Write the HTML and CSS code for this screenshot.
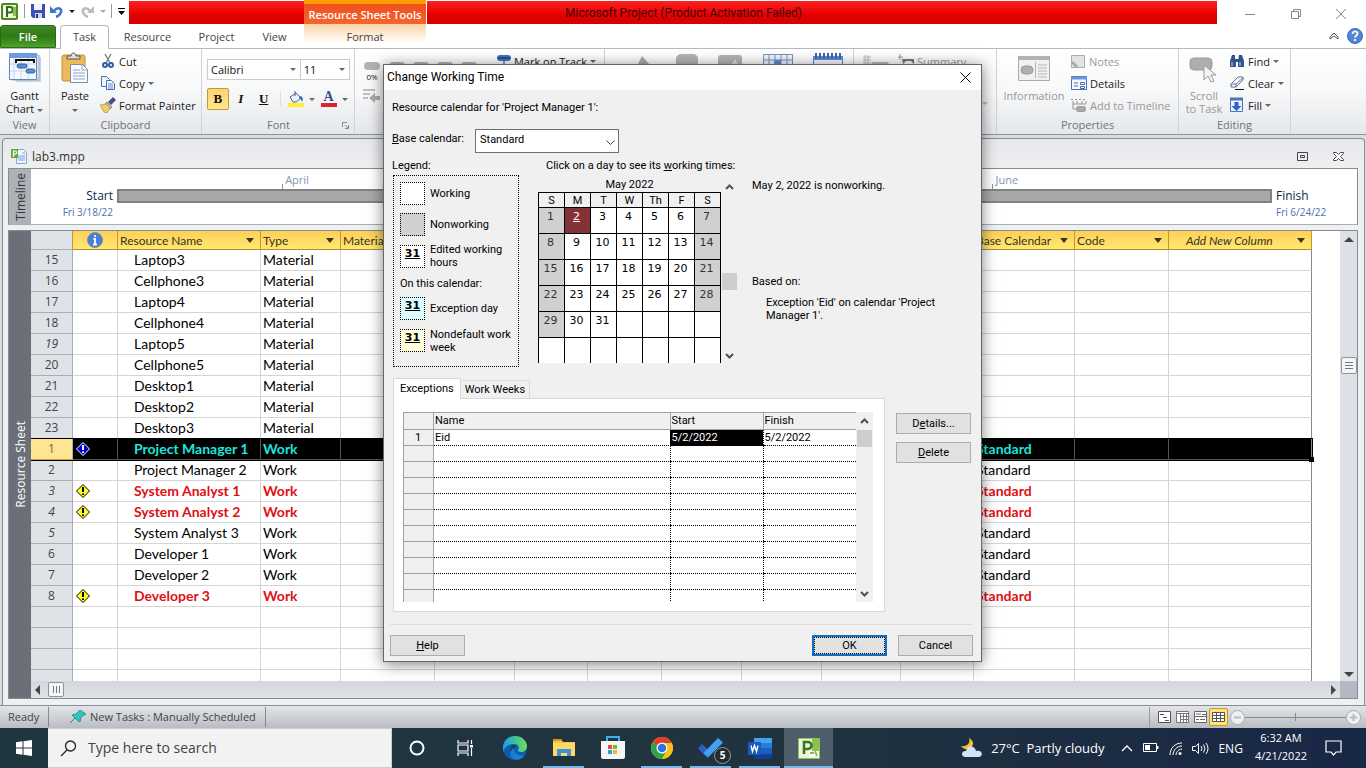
FILE: index.html
```html
<!DOCTYPE html>
<html lang="en">
<head>
<meta charset="utf-8">
<title>Microsoft Project</title>
<link rel="stylesheet" href="styles.css">
</head>
<body>
<svg class="defs" width="0" height="0" aria-hidden="true">
  <defs>
    <symbol id="warn" viewBox="0 0 14 14"><path d="M7 .5 13.5 7 7 13.5.5 7Z" stroke="#000" fill="#ffff1e"/><path d="M7 3v5M7 9.500v1.500" stroke="#000" stroke-width="2"/></symbol>
    <symbol id="warn-sel" viewBox="0 0 14 14"><path d="M7 .5 13.5 7 7 13.5.5 7Z" stroke="#fff" fill="#0000e0"/><path d="M7 3v5M7 9.500v1.500" stroke="#fff" stroke-width="2"/></symbol>
    <linearGradient id="edge" x1="0" x2="1"><stop offset="0" stop-color="#1b9de2"/><stop offset="1" stop-color="#6be05a"/></linearGradient>
  </defs>
</svg>

<header class="titlebar">
  <div class="quick">
    <svg width="17" height="17" viewBox="0 0 17 17"><rect x="1" y="1" width="15" height="15" rx="1" fill="#e8f3d6" stroke="#4d8a1c" stroke-width="2"/><path d="M3 3h8v11H3z" fill="#fff"/><path d="M6 14V4h3a2.500 2.500 0 0 1 0 5.500H6" fill="none" stroke="#2f6f10" stroke-width="2.200"/><path d="M12 4h3v9h-3z" fill="#8cc152"/></svg>
    <i class="vline"></i>
    <button class="plain" aria-label="Save"><svg width="14" height="14" viewBox="0 0 14 14"><path d="M0 0h14v14H2L0 12z" fill="#3c4fb4"/><path d="M3 0h8v6H3z" fill="#f1f4ff"/><path d="M4 9h7v5H4z" fill="#cfd6ee"/><path d="M5 10h2v4H5z" fill="#26337e"/></svg></button>
    <button class="plain" aria-label="Undo"><svg width="13" height="13" viewBox="0 0 13 13"><path d="M4 6c4-5 8-2 7 1-.6 2-2 4-5 5" fill="none" stroke="#3f74cf" stroke-width="2.500"/><path d="M0 1v7h7z" fill="#3f74cf"/></svg></button>
    <i class="arrow"></i>
    <button class="plain" aria-label="Redo"><svg width="13" height="13" viewBox="0 0 13 13"><path d="M9 6C5 1 1 4 2 7c.6 2 2 4 5 5" fill="none" stroke="#bcbcbc" stroke-width="2.500"/><path d="M13 1v7H6z" fill="#bcbcbc"/></svg></button>
    <i class="arrow pale"></i>
    <i class="vline"></i>
    <svg width="7" height="7" viewBox="0 0 7 7"><path d="M0 0h7v1H0zM0 3h7L3.500 7z" fill="#000"/></svg>
  </div>
  <div class="red red-left"></div>
  <div class="tools-tab">Resource Sheet Tools</div>
  <div class="red red-main">Microsoft Project (Product Activation Failed)</div>
  <div class="win-controls">
    <button class="plain" aria-label="Minimize"><svg width="10" height="10"><path d="M0 5.500h10" stroke="#888"/></svg></button>
    <button class="plain" aria-label="Restore"><svg width="10" height="10" fill="none" stroke="#888"><path d="M.5 2.500h7v7h-7zM2.500 2.500v-2h7v7h-2"/></svg></button>
    <button class="plain" aria-label="Close"><svg width="10" height="10" stroke="#888"><path d="M0 0l10 10M10 0L0 10"/></svg></button>
  </div>
</header>

<nav class="tabs">
  <button class="tab file">File</button>
  <button class="tab task">Task</button>
  <button class="tab resource">Resource</button>
  <button class="tab project">Project</button>
  <button class="tab view">View</button>
  <button class="tab format">Format</button>
  <div class="tabs-end">
    <svg width="10" height="8" viewBox="0 0 10 8" fill="none" stroke="#555"><path d="M1 5 5 1l4 4v2L5 4 1 7z"/></svg>
    <button class="plain" aria-label="Help"><svg width="16" height="16" viewBox="0 0 16 16"><circle cx="8" cy="8" r="7.500" fill="#4f86d6" stroke="#3a67b0"/><path d="M5.500 6c0-3.500 5-3.200 5-.3C10.500 7.500 8 7.500 8 9.500M8 11v2" fill="none" stroke="#fff" stroke-width="1.800"/></svg></button>
  </div>
</nav>

<section class="ribbon">
  <div class="group g-view">
    <div class="group-body">
      <button class="big">
        <svg width="32" height="32" viewBox="0 0 32 32"><path d="M5 5h27v25H7z" fill="#c9d2e0"/><path d="M3 3h27v25H3z" fill="#dbe2ee" stroke="#9eb0cb"/><path d="M.5 1.500h27v26H.5z" fill="#f4f8ff" stroke="#5f86c2"/><path d="M0 1h28v5H0z" fill="#6d9ae0"/><path d="M5 6v21M12 6v21M19 6v21M1 12h26M1 19h26" stroke="#c5d5ee"/><path d="M6 7v4h2V9h16v2h2V7z" fill="#111"/><rect x="8" y="12" width="10" height="4" rx="2" fill="#5591ce" stroke="#2f639e"/><rect x="17" y="17" width="9" height="4" rx="2" fill="#5591ce" stroke="#2f639e"/></svg>
        <span>Gantt<br>Chart <i class="caret"></i></span>
      </button>
    </div>
    <div class="group-name">View</div>
  </div>
  <div class="group g-clip">
    <div class="group-body">
      <button class="big">
        <svg width="28" height="32" viewBox="0 0 28 32"><rect x="1" y="3" width="23" height="26" rx="2" fill="#edb95a" stroke="#c48c35"/><path d="M6 7V4h4c0-4 5-4 5 0h4v3z" fill="#ddd" stroke="#555"/><path d="M9.500 12.500h12l5 5v13h-17z" fill="#fbfcff" stroke="#7b8cac"/><path d="M21 12v6h6M12 18h7M12 21h12M12 24h12M12 27h12" fill="none" stroke="#8ba2c8"/></svg>
        <span>Paste<br><i class="caret"></i></span>
      </button>
      <div class="stack">
        <button class="small"><svg width="16" height="16" viewBox="0 0 16 16"><path d="M5 1l5 9M11 1 6 10" stroke="#788" stroke-width="1.500"/><circle cx="5" cy="12" r="2" fill="none" stroke="#2e5fa8" stroke-width="2"/><circle cx="11" cy="12" r="2" fill="none" stroke="#2e5fa8" stroke-width="2"/></svg>Cut</button>
        <button class="small"><svg width="16" height="16" viewBox="0 0 16 16" fill="#f3f8ff" stroke="#4370b4"><path d="M1.500 1.500h5l3 3v7h-8z"/><path d="M6.500 5.500h5l3 3v6h-8z"/><path d="M8 9h5M8 11h5M8 13h5" stroke-width=".8"/></svg>Copy <i class="caret"></i></button>
        <button class="small"><svg width="16" height="16" viewBox="0 0 16 16"><path d="M13 0l3 3-5 5-3-3z" fill="#4a4c86"/><path d="M7 5l5 5-2 2-5-5z" fill="#bbb" stroke="#666" stroke-width=".7"/><path d="M0 8l6-1 4 4-3 5-3-1z" fill="#f2cf6b" stroke="#b08a2c" stroke-width=".7"/></svg>Format Painter</button>
      </div>
    </div>
    <div class="group-name">Clipboard</div>
  </div>
  <div class="group g-font">
    <div class="group-body font-body">
      <div class="font-row">
        <button class="combo family" aria-label="Font family">Calibri<i class="caret"></i></button><button class="combo size" aria-label="Font size">11<i class="caret"></i></button>
      </div>
      <div class="font-row marks">
        <button class="mark on"><b>B</b></button>
        <button class="mark"><em>I</em></button>
        <button class="mark"><u>U</u></button>
        <i class="vline"></i>
        <button class="mark wide" aria-label="Fill color"><svg width="16" height="16" viewBox="0 0 16 16"><path d="M2 6l6-4 5 5-5 4H5z" fill="#eef3fb" stroke="#47618f"/><path d="M7 5V0" stroke="#47618f"/><path d="M12 5c4 1 3 4 2 6-1-3-2-3-3-4z" fill="#3c6cc0"/><path d="M0 12h16v4H0z" fill="#ffee2e"/></svg><i class="caret"></i></button>
        <button class="mark wide" aria-label="Font color"><span class="letter">A</span><i class="caret"></i></button>
      </div>
    </div>
    <div class="group-name">Font <svg class="launcher" width="7" height="7" fill="none" stroke="#888"><path d="M.5 5V.5H5M3 3l3 3M6.500 3v3.500H3"/></svg></div>
  </div>
  <div class="group g-schedule">
    <div class="group-body peek">
      <div class="pct"><i class="pill"></i>0%<svg width="17" height="14" viewBox="0 0 17 14"><path d="M0 1h12M0 5h7M0 9h5" stroke="#888"/><path d="M17 7h-5V4L6 9l6 5v-3h5z" fill="#aaa"/></svg></div>
      <div class="pills"><i class="pill"></i><i class="pill"></i><i class="pill"></i><i class="pill"></i></div>
      <button class="small"><svg width="14" height="14" viewBox="0 0 14 14"><rect y="1" width="14" height="6" rx="3" fill="#3f76c8"/><path d="M1 4h12M7 7v5M5 11h5" stroke="#223"/></svg>Mark on Track <i class="caret"></i></button>
    </div>
  </div>
  <div class="group g-tasks">
    <div class="group-body peek spread">
      <svg width="26" height="26" viewBox="0 0 26 26"><path d="M9 12 13 4l8 9z" fill="#aaa"/></svg>
      <svg width="22" height="26"><rect y="2" width="22" height="20" rx="5" fill="#b4b4b4"/></svg>
      <svg width="24" height="26"><rect y="3" width="24" height="20" rx="3" fill="#b4b4b4"/><path d="M12 14l5-7 4 7z" fill="#ddd"/></svg>
      <svg width="30" height="26"><path d="M0 2h30v24H0z" fill="#eef4ff"/><path d="M11 8h7v6h-7z" fill="#5a8ee0"/><path d="M.5 26V2.500h29V26M6 2v24M12 2v24M18 2v24M24 2v24M0 8h30M0 14h30" stroke="#7d92b5" fill="none"/></svg>
      <svg width="30" height="26"><path d="M.5 4.500h29V26H.5z" fill="#f4f8ff" stroke="#5b83c4"/><path d="M0 4h30v4H0z" fill="#5f8fdc"/><path d="M3 1v6M7 1v6M11 1v6M15 1v6M19 1v6M23 1v6M27 1v6" stroke="#3e66a8" stroke-width="2"/></svg>
    </div>
  </div>
  <div class="group g-insert">
    <div class="group-body peek">
      <svg width="28" height="26"><path d="M1 5h8M1 8h8M1 11h8M3 3v9M6 3v9" stroke="#bbb"/><rect x="9" y="10" width="18" height="10" rx="3" fill="#b6b6b6"/></svg>
      <button class="small dim"><svg width="16" height="16"><path d="M0 4h5M2 1v6" stroke="#999"/><path d="M4 6h12v5l-3-3H8l-3 3z" fill="#777"/></svg>Summary</button>
      <i class="caret pale-caret"></i>
    </div>
  </div>
  <div class="group g-props">
    <div class="group-body">
      <button class="big dim">
        <svg width="32" height="32" viewBox="0 0 32 32"><path d="M.5 4.500h31v24H.5z" fill="#f1f1f1" stroke="#aaa"/><path d="M0 4h32v4H0z" fill="#b2b2b2"/><rect x="3" y="14" width="12" height="8" rx="4" fill="#b0b0b0" stroke="#999"/><path d="M17.500 10v16M20 13h9M20 16h9M20 19h9M20 22h9M20 25h9" stroke="#b5b5b5"/></svg>
        <span>Information</span>
      </button>
      <div class="stack">
        <button class="small dim"><svg width="15" height="15"><path d="M.5 1.500h13v12H.5z" fill="#e3e3e3" stroke="#aaa"/><path d="M1 8l5 5" stroke="#aaa" stroke-width="3"/></svg>Notes</button>
        <button class="small"><svg width="16" height="16" fill="none" stroke="#4a72b0"><path d="M.5 1.500h15v13H.5z" fill="#f4f8ff"/><path d="M0 3h16" stroke="#6a95dd" stroke-width="3"/><path d="M3 8h4M3 11h4M9.500 7.500h4v2h-4zM9.500 11.500h4v2h-4z"/></svg>Details</button>
        <button class="small dim"><svg width="16" height="16" fill="none" stroke="#999"><path d="M0 2.500h16" stroke-dasharray="2 2"/><path d="M2 4v8M6 4v3M11 4v3M15 4v3M2 7h13M2 12h6"/><rect x="5.500" y="9.500" width="9" height="5" rx="2" fill="#aaa"/></svg>Add to Timeline</button>
      </div>
    </div>
    <div class="group-name">Properties</div>
  </div>
  <div class="group g-edit">
    <div class="group-body">
      <button class="big dim">
        <svg width="30" height="32" viewBox="0 0 30 32"><rect x="1" y="6" width="22" height="12" rx="4" fill="#aeaeae" stroke="#999"/><path d="M15 13v15l4-4 3 6 3-1-3-6h5z" fill="#f4f4f4" stroke="#999"/></svg>
        <span>Scroll<br>to Task</span>
      </button>
      <div class="stack">
        <button class="small"><svg width="16" height="16"><path d="M3 2h3v3l1 3v6H1V8zM10 2h3l2 6v6H9V8z" fill="#31548f"/><path d="M6 6h4v3H6z" fill="#31548f"/><path d="M3 9v4M11 9v4" stroke="#c9d8f0"/></svg>Find <i class="caret"></i></button>
        <button class="small"><svg width="16" height="16" fill="#f8faff" stroke="#5b6f93"><path d="M2 9l7-7h5v3l-7 7H2z"/><path d="M2 9h5l7-6M7 9v3"/><path d="M6 14.500h9" stroke="#111"/></svg>Clear <i class="caret"></i></button>
        <button class="small"><svg width="16" height="16"><path d="M1.500 1.500h12v13h-12z" fill="#eaf1ff" stroke="#4c74b6"/><path d="M1 2h13" stroke="#4c74b6" stroke-width="3"/><path d="M5.500 5h4v4h3l-5 5-5-5h3z" fill="#2b62d0"/></svg>Fill <i class="caret"></i></button>
      </div>
    </div>
    <div class="group-name">Editing</div>
  </div>
</section>

<main class="workspace">
  <div class="doc">
    <div class="doc-title">
      <svg width="16" height="16" viewBox="0 0 16 16"><path d="M5.500 1.500h7l3 3v11h-10z" fill="#eef4ff" stroke="#86a5d4"/><path d="M7 8h7M7 10h7M7 12h7M11 5h3" stroke="#7aa0dc"/><path d="M0 1h7v9H0z" fill="#62a838"/><path d="M2.500 9V3h1.500a1.500 1.500 0 0 1 0 3.200H3" fill="none" stroke="#fff" stroke-width="1.200"/></svg>
      <span>lab3.mpp</span>
      <div class="doc-controls">
        <button class="plain" aria-label="Restore document"><svg width="11" height="9" fill="none" stroke="#444"><path d="M.5.5h10v8H.5zM3.500 3.500h4v2h-4z"/></svg></button>
        <button class="plain" aria-label="Close document"><svg width="11" height="9" viewBox="0 0 11 9" fill="#fff" stroke="#444"><path d="M.5.5h3l2 2 2-2h3v1l-3 3 3 3v1h-3l-2-2-2 2h-3v-1l3-3-3-3z"/></svg></button>
      </div>
    </div>
    <section class="pane timeline">
      <div class="pane-label light"><span>Timeline</span></div>
      <div class="tl-body">
        <div class="tl-end start"><span>Start</span><small>Fri 3/18/22</small></div>
        <div class="tl-track">
          <span class="month" style="left:14.300%">April</span>
          <span class="month" style="left:75.800%">June</span>
          <div class="tl-bar"></div>
        </div>
        <div class="tl-end"><span>Finish</span><small>Fri 6/24/22</small></div>
      </div>
    </section>
    <section class="pane sheet">
      <div class="pane-label"><span>Resource Sheet</span></div>
      <div class="sheet-area">
        <div class="sheet-view">
          <table class="res">
            <colgroup><col class="c-num"><col class="c-info"><col class="c-name"><col class="c-type"><col class="c-mat"><col class="c-80"><col class="c-73"><col class="c-74"><col class="c-80"><col class="c-80"><col class="c-79"><col class="c-73"><col class="c-base"><col class="c-code"><col class="c-add"></colgroup>
            <thead><tr><th class="num"></th><th class="info"><svg width="16" height="16"><circle cx="8" cy="8" r="7.500" fill="#4a7fd4" stroke="#7a8fb8"/><path d="M8 3v2M6.500 7H8v5M6 12.500h4" stroke="#fff" stroke-width="1.800" fill="none"/></svg></th><th>Resource Name<i class="drop"></i></th><th>Type<i class="drop"></i></th><th>Material</th><th></th><th></th><th></th><th></th><th></th><th></th><th></th><th>Base Calendar<i class="drop"></i></th><th>Code<i class="drop"></i></th><th class="add">Add New Column<i class="drop"></i></th></tr></thead>
            <tbody>
            <tr><th>15</th><td><td>Laptop3<td>Material<td><td><td><td> <td><td><td><td> <td><td><td></tr>
            <tr><th>16</th><td><td>Cellphone3<td>Material<td><td><td><td> <td><td><td><td> <td><td><td></tr>
            <tr><th>17</th><td><td>Laptop4<td>Material<td><td><td><td> <td><td><td><td> <td><td><td></tr>
            <tr><th>18</th><td><td>Cellphone4<td>Material<td><td><td><td> <td><td><td><td> <td><td><td></tr>
            <tr><th class="it">19</th><td><td>Laptop5<td>Material<td><td><td><td> <td><td><td><td> <td><td><td></tr>
            <tr><th>20</th><td><td>Cellphone5<td>Material<td><td><td><td> <td><td><td><td> <td><td><td></tr>
            <tr><th>21</th><td><td>Desktop1<td>Material<td><td><td><td> <td><td><td><td> <td><td><td></tr>
            <tr><th>22</th><td><td>Desktop2<td>Material<td><td><td><td> <td><td><td><td> <td><td><td></tr>
            <tr><th>23</th><td><td>Desktop3<td>Material<td><td><td><td> <td><td><td><td> <td><td><td></tr>
            <tr class="sel"><th>1</th><td><svg width="14" height="14"><use href="#warn-sel"/></svg><td>Project Manager 1<td>Work<td><td><td><td> <td><td><td><td> <td>Standard<td><td></tr>
            <tr><th>2</th><td><td>Project Manager 2<td>Work<td><td><td><td> <td><td><td><td> <td>Standard<td><td></tr>
            <tr class="over"><th class="it">3</th><td><svg width="14" height="14"><use href="#warn"/></svg><td>System Analyst 1<td>Work<td><td><td><td> <td><td><td><td> <td>Standard<td><td></tr>
            <tr class="over"><th class="it">4</th><td><svg width="14" height="14"><use href="#warn"/></svg><td>System Analyst 2<td>Work<td><td><td><td> <td><td><td><td> <td>Standard<td><td></tr>
            <tr><th class="it">5</th><td><td>System Analyst 3<td>Work<td><td><td><td> <td><td><td><td> <td>Standard<td><td></tr>
            <tr><th>6</th><td><td>Developer 1<td>Work<td><td><td><td> <td><td><td><td> <td>Standard<td><td></tr>
            <tr><th>7</th><td><td>Developer 2<td>Work<td><td><td><td> <td><td><td><td> <td>Standard<td><td></tr>
            <tr class="over"><th>8</th><td><svg width="14" height="14"><use href="#warn"/></svg><td>Developer 3<td>Work<td><td><td><td> <td><td><td><td> <td>Standard<td><td></tr>
            <tr><th></th><td><td><td><td><td><td><td> <td><td><td><td> <td><td><td></tr>
            <tr><th></th><td><td><td><td><td><td><td> <td><td><td><td> <td><td><td></tr>
            <tr><th></th><td><td><td><td><td><td><td> <td><td><td><td> <td><td><td></tr>
            <tr><th></th><td><td><td><td><td><td><td> <td><td><td><td> <td><td><td></tr>
            </tbody>
          </table>
        </div>
        <div class="vscroll"><i class="tri up"></i><div class="vthumb"><i></i><i></i><i></i></div><i class="tri down"></i></div>
        <div class="hscroll"><i class="tri left"></i><div class="hthumb"><i></i><i></i><i></i></div><i class="tri right"></i></div>
        <div class="corner"></div>
      </div>
    </section>
  </div>
</main>

<footer class="status">
  <span class="ready">Ready</span>
  <span class="newtasks"><svg width="16" height="14" viewBox="0 0 16 14"><path d="M0 13l5-5" stroke="#567"/><path d="M2 5l4-1 4-4 6 4-5 3-1 5-3-2z" fill="#2fc4bd" stroke="#168c8c" stroke-width=".8"/></svg>New Tasks : Manually Scheduled</span>
  <div class="views">
    <button class="plain" aria-label="Gantt view"><svg width="13" height="12" fill="#fff" stroke="#555"><path d="M.5.5h12v11H.5z"/><path d="M2 3.500h4M5 6.500h4M7 9.500h4"/></svg></button>
    <button class="plain" aria-label="Usage view"><svg width="13" height="12" fill="#fff" stroke="#777"><path d="M.5.5h12v11H.5z"/><path d="M1 2.500h11M4.500 3v9M7.500 3v9M10.500 3v9M5 5.500h8M5 8.500h8"/></svg></button>
    <button class="plain" aria-label="Team planner"><svg width="13" height="12" fill="#fff" stroke="#666"><path d="M.5.5h12v11H.5zM0 5.500h13M2 3h5M8 3.500h4M2 8.500h3M6 8.500h5"/></svg></button>
    <button class="plain current" aria-label="Resource sheet"><svg width="13" height="10" fill="#fff" stroke="#555"><path d="M.5.5h12v9H.5zM.5 3.500h12M.5 6.500h12M4.500 0v10M8.500 0v10"/></svg></button>
  </div>
  <div class="zoom"><svg width="15" height="15" viewBox="0 0 15 15"><circle cx="7.500" cy="7.500" r="7" fill="#eef0f2" stroke="#aaa"/><path d="M4 7.500h7" stroke="#bbb" stroke-width="2"/></svg><i class="rail"></i><svg width="15" height="15" viewBox="0 0 15 15"><circle cx="7.500" cy="7.500" r="7" fill="#eef0f2" stroke="#aaa"/><path d="M4 7.500h7M7.500 4v7" stroke="#bbb" stroke-width="2"/></svg></div>
</footer>

<footer class="taskbar">
  <button class="tb start-btn" aria-label="Start"><svg width="16" height="16" fill="#fff"><path d="M0 2.300 6.500 1.300v6.200H0zM7.500 1.200 16 0v7.500H7.500zM0 8.500h6.500v6.200L0 13.700zM7.500 8.500H16V16l-8.500-1.200z"/></svg></button>
  <label class="search"><svg width="17" height="17" fill="none" stroke="#222" stroke-width="1.300"><circle cx="10.500" cy="6" r="5"/><path d="M7 10 1 16"/></svg><input type="text" aria-label="Search" placeholder="Type here to search"></label>
  <button class="tb" aria-label="Cortana"><svg width="16" height="16"><circle cx="8" cy="8" r="6.500" fill="none" stroke="#fff" stroke-width="2"/></svg></button>
  <button class="tb" aria-label="Task view"><svg width="17" height="16" fill="none" stroke="#fff" stroke-width="1.200"><path d="M1 0v3h10V0M1 5h10v6H1zM1 16v-3h10v3M14.500 0v4M14.500 8v8"/><path d="M13 5h3v2.500h-3z" fill="#fff" stroke="none"/></svg></button>
  <button class="tb" aria-label="Edge"><svg width="24" height="24" viewBox="0 0 24 24"><circle cx="12" cy="12" r="12" fill="#0d5cb0"/><path d="M0 12C0 4 6 0 12 0c7 0 12 5 12 10 0 4-3 6-6 6-2 0-4-1-3-2 2-3 0-6-4-6-6 0-9 3-11 8z" fill="url(#edge)"/><path d="M9 10c-4 5 0 12 6 13 3 0 6-2 7-4-6 3-12 0-11-6 0-1 1-2 2-3-1-1-3-1-4 0z" fill="#1f3a44"/><path d="M11 12c0 5 5 9 11 7-3 5-9 6-13 3-3-3-2-8 2-10z" fill="#1a7fd0"/></svg></button>
  <button class="tb open" aria-label="File Explorer"><svg width="22" height="20"><path d="M0 1h8l2 3h12v14H0z" fill="#f9c744"/><path d="M0 5h22v13H0z" fill="#ffd968"/><path d="M0 1h8l1 2H0z" fill="#d9961c"/><path d="M4 18v-7h14v7h-4v-3H8v3z" fill="#3f93d2"/></svg></button>
  <button class="tb" aria-label="Store"><svg width="24" height="24"><path d="M6 6V1h12v5" fill="none" stroke="#35b5e8" stroke-width="2"/><path d="M0 5h24v16q0 2-2 2H2q-2 0-2-2z" fill="#f5f6f7"/><path d="M7 9h4v4H7z" fill="#e94b2b"/><path d="M12 9h4v4h-4z" fill="#7cb82f"/><path d="M7 14h4v4H7z" fill="#2aa0da"/><path d="M12 14h4v4h-4z" fill="#f6b82b"/></svg></button>
  <button class="tb open" aria-label="Chrome"><svg width="22" height="22" viewBox="0 0 22 22"><circle cx="11" cy="11" r="11" fill="#fbc116"/><path d="M11 11 1.500 5.500A11 11 0 0 1 20.500 5.500z" fill="#e33b2e"/><path d="M1.500 5.500A11 11 0 0 0 11 22l5-8.500-5-2.500z" fill="#2ba24c"/><path d="M11 6h9.700a11 11 0 0 1-9.700 16l4.500-8z" fill="#fbc116"/><circle cx="11" cy="11" r="5.500" fill="#fff"/><circle cx="11" cy="11" r="4.300" fill="#2f74e0"/></svg></button>
  <button class="tb open" aria-label="To Do, 5 due"><svg width="26" height="20"><path d="M4 6 0 10.500l9 9 4.500-4.500z" fill="#2a62c4"/><path d="M20 0l5 4.500L10 19.500 5.500 15z" fill="#3fa2ee"/></svg><span class="badge">5</span></button>
  <button class="tb open" aria-label="Word"><svg width="24" height="21"><path d="M6 0h18v21H6z" fill="#1d5fbf"/><path d="M6 0h18v5H6z" fill="#41a5ee"/><path d="M6 5h18v5H6z" fill="#2b7cd3"/><path d="M6 16h18v5H6z" fill="#103f91"/><path d="M0 4h13v13H0z" fill="#185abd"/><path d="M3 7.500l1.500 6 2-6 2 6 1.500-6" fill="none" stroke="#fff" stroke-width="1.400"/></svg></button>
  <button class="tb open active" aria-label="Project"><svg width="22" height="21"><path d="M.5.5h21v20H.5z" fill="#eaf4d8" stroke="#8fc25a"/><path d="M14 1h7v12h-7z" fill="#8cc152"/><path d="M6 16V4h4a3 3 0 0 1 0 7H6" fill="none" stroke="#35781a" stroke-width="2.500"/><path d="M11 13h10v7l-2-2-8 1z" fill="#fff"/><path d="M12 15h4M17 13l2 5" stroke="#8cb368" stroke-width="2"/></svg></button>
  <div class="tray">
    <svg width="24" height="20"><path d="M9 0c2 5-2 9-8 8 3 5 12 4 12-3 0-2-2-4-4-5z" fill="#fbc02d"/><path d="M5 19c-5-1-3-7 1-6 1-6 9-6 10 0 6-2 8 5 3 6z" fill="#cfe4f8"/></svg>
    <span class="weather">27°C&nbsp; Partly cloudy</span>
    <svg class="chev" width="12" height="7" fill="none" stroke="#fff" stroke-width="1.300"><path d="M1 6l5-5 5 5"/></svg>
    <svg width="16" height="10"><path d="M.5.500h13v8H.5z" fill="none" stroke="#fff"/><path d="M2 2h5v5H2zM14 3h1.500v3H14z" fill="#fff"/></svg>
    <svg width="13" height="13" fill="none" stroke="#fff"><path d="M1 13C1 6 6 1 13 1M4 13c0-5 4-9 9-9M7 13c0-3 3-6 6-6"/><circle cx="11" cy="11.500" r="1.500" fill="#fff" stroke="none"/></svg>
    <svg width="17" height="13" fill="none" stroke="#fff"><path d="M.5 4.500h3l3-3v10l-3-3h-3zM9 4q2 2.500 0 5M11.500 2.500q3 4 0 8M14 1q4 5.500 0 11"/></svg>
    <span class="lang">ENG</span>
    <span class="clock">6:32 AM<br>4/21/2022</span>
    <svg class="note" width="17" height="16" fill="none" stroke="#fff" stroke-width="1.200"><path d="M1 1h15v11h-5l-2.500 3L6 12H1z"/></svg>
  </div>
</footer>

<div class="dialog" role="dialog" aria-labelledby="dlg-title">
  <div class="dlg-head"><span id="dlg-title">Change Working Time</span><button class="plain" aria-label="Close dialog"><svg width="11" height="11" stroke="#000"><path d="M.5.500l10 10M10.500.500l-10 10"/></svg></button></div>
  <div class="dlg-body">
    <p class="dlg-for">Resource calendar for 'Project Manager 1':</p>
    <div class="base"><label for="base"><u>B</u>ase calendar:</label><span class="select-wrap"><select id="base"><option>Standard</option></select><svg width="9" height="6" fill="none" stroke="#444"><path d="M.5.500l4 4 4-4"/></svg></span></div>
    <div class="top">
      <div class="legend-col">
        <div class="cap">Legend:</div>
        <div class="legend">
          <div class="item"><i class="sw"></i>Working</div>
          <div class="item"><i class="sw gray"></i>Nonworking</div>
          <div class="item"><b class="sw">31</b>Edited working<br>hours</div>
          <div class="sub">On this calendar:</div>
          <div class="item"><b class="sw cyan">31</b>Exception day</div>
          <div class="item"><b class="sw cream">31</b>Nondefault work<br>week</div>
        </div>
      </div>
      <div class="cal-col">
        <div class="cap cal-cap">Click on a day to see its <u>w</u>orking times:</div>
        <div class="cal-row">
          <table class="cal">
            <caption>May 2022</caption>
            <thead><tr><th>S</th><th>M</th><th>T</th><th>W</th><th>Th</th><th>F</th><th>S</th></tr></thead>
            <tbody>
            <tr><td class="off">1</td><td class="today"><u>2</u></td><td>3</td><td>4</td><td>5</td><td>6</td><td class="off">7</td></tr>
            <tr><td class="off">8</td><td>9</td><td>10</td><td>11</td><td>12</td><td>13</td><td class="off">14</td></tr>
            <tr><td class="off">15</td><td>16</td><td>17</td><td>18</td><td>19</td><td>20</td><td class="off">21</td></tr>
            <tr><td class="off">22</td><td>23</td><td>24</td><td>25</td><td>26</td><td>27</td><td class="off">28</td></tr>
            <tr><td class="off">29</td><td>30</td><td>31</td><td></td><td></td><td></td><td></td></tr>
            <tr><td></td><td></td><td></td><td></td><td></td><td></td><td></td></tr>
            </tbody>
          </table>
          <div class="wscroll cal-scroll"><svg width="9" height="6"><path d="M1 5l3.500-3.500L8 5"/></svg><i></i><svg width="9" height="6"><path d="M1 1l3.500 3.500L8 1"/></svg></div>
        </div>
      </div>
      <div class="info-col">
        <p>May 2, 2022 is nonworking.</p>
        <p class="based">Based on:</p>
        <p class="why">Exception 'Eid' on calendar 'Project Manager 1'.</p>
      </div>
    </div>
    <div class="bottom">
      <div class="tabbox">
        <div class="dtabs"><button class="dtab cur">Exceptions</button><button class="dtab">Work Weeks</button></div>
        <div class="dpanel">
          <div class="exc-view">
            <table class="exc">
              <colgroup><col class="e-num"><col><col class="e-start"><col class="e-fin"></colgroup>
              <thead><tr><th></th><th>Name</th><th>Start</th><th>Finish</th></tr></thead>
              <tbody>
              <tr><th>1</th><td>Eid</td><td class="picked">5/2/2022</td><td>5/2/2022</td></tr>
              <tr><th></th><td><td><td></tr><tr><th></th><td><td><td></tr><tr><th></th><td><td><td></tr><tr><th></th><td><td><td></tr><tr><th></th><td><td><td></tr>
              <tr><th></th><td><td><td></tr><tr><th></th><td><td><td></tr><tr><th></th><td><td><td></tr><tr><th></th><td><td><td></tr><tr><th></th><td><td><td></tr>
              </tbody>
            </table>
          </div>
          <div class="wscroll exc-scroll"><svg width="9" height="6"><path d="M1 5l3.500-3.500L8 5"/></svg><i></i><svg width="9" height="6"><path d="M1 1l3.500 3.500L8 1"/></svg></div>
        </div>
      </div>
      <div class="side"><button class="btn">D<u>e</u>tails...</button><button class="btn"><u>D</u>elete</button></div>
    </div>
    <div class="actions"><button class="btn help"><u>H</u>elp</button><button class="btn ok">OK</button><button class="btn">Cancel</button></div>
  </div>
</div>
</body>
</html>
```

FILE: styles.css
```css
* { box-sizing: border-box; }
html, body { height: 100%; }
body { margin: 0; display: flex; flex-direction: column; overflow: hidden; position: relative; background: #fff; color: #222; font: 11px/13px "Open Sans", "Noto Sans", sans-serif; }
.defs { position: absolute; }
button { font: inherit; color: inherit; padding: 0; border: 0; background: none; display: inline-flex; align-items: center; justify-content: center; }
svg { flex: none; }
p { margin: 0; }
.vline { width: 1px; height: 14px; background: #999; }
.arrow { border: 3px solid transparent; border-top-color: #222; border-bottom: 0; }
.arrow.pale { border-top-color: #aaa; }
.caret { display: inline-block; border: 3px solid transparent; border-top-color: #666; border-bottom: 0; vertical-align: middle; }

/* title bar */
.titlebar { display: flex; height: 24px; flex: none; }
.quick { width: 129px; flex: none; display: flex; align-items: center; justify-content: space-between; padding: 0 4px 2px 1px; }
.red { margin-top: 1px; background: linear-gradient(#ff2020, #e60000 60%, #d40000); }
.red-left { width: 175px; flex: none; }
.tools-tab { width: 122px; flex: none; margin-right: 1px; padding-top: 4px; background: linear-gradient(#ff9c00 4px, #f0501c 4px, #f4652e); color: #fff; font-size: 11px; line-height: 22px; font-weight: 600; text-align: center; white-space: nowrap; }
.red-main { flex: 1; padding-left: 138px; color: #3a0505; font: 12px/24px Roboto, "Open Sans", sans-serif; white-space: nowrap; }
.win-controls { width: 149px; flex: none; display: flex; align-items: center; justify-content: space-between; padding: 4px 20px 0 28px; }

/* ribbon tabs */
.tabs { display: flex; height: 25px; flex: none; border-bottom: 1px solid #b6babf; align-items: flex-end; }
.tab { height: 24px; flex: none; color: #444; }
.file { width: 56px; margin-right: 4px; height: 23px; border-radius: 3px 3px 0 0; background: linear-gradient(#3f8a28, #2c7a14 50%, #4fa32a); border: 1px solid #2a6b18; color: #fff; font-weight: 600; }
.task { width: 49px; border: 1px solid #b6babf; border-bottom: 0; border-radius: 4px 4px 0 0; background: #fff; margin-bottom: -1px; padding-bottom: 2px; }
.resource { width: 77px; }
.project { width: 61px; }
.view { width: 55px; margin-right: 2px; }
.format { width: 122px; background: linear-gradient(#fcd5a8, #fff 80%); }
.tabs-end { margin-left: auto; display: flex; gap: 8px; align-items: center; height: 24px; padding-right: 3px; }

/* ribbon */
.ribbon { display: flex; height: 86px; flex: none; background: linear-gradient(#fff, #f7f8f9 50%, #e4e7eb); border-bottom: 1px solid #8d939b; }
.group { flex: none; display: flex; flex-direction: column; border-right: 1px solid #d0d3d8; overflow: hidden; }
.group-body { flex: 1; display: flex; padding-top: 1px; }
.group-name { position: relative; height: 18px; text-align: center; color: #6b7380; line-height: 18px; }
.launcher { position: absolute; right: 5px; top: 6px; }
.g-view { width: 50px; }
.g-clip { width: 152px; }
.g-font { width: 153px; padding-left: 1px; }
.g-schedule { width: 250px; }
.g-tasks { flex: 1; }
.g-insert { width: 143px; }
.g-props { width: 182px; }
.g-edit { width: 112px; }
.ribbon::after { content: ""; width: 75px; flex: none; }
.big { flex-direction: column; justify-content: flex-start; align-self: flex-start; gap: 5px; padding-top: 2px; text-align: center; white-space: nowrap; }
.g-view .big { width: 49px; }
.g-clip .big { width: 50px; }
.g-props .big { width: 74px; }
.g-edit .big { width: 50px; }
.stack { display: flex; flex-direction: column; }
.small { height: 22px; gap: 3px; justify-content: flex-start; white-space: nowrap; }
.dim { color: #999; }
.font-body { flex-direction: column; padding: 10px 4px 0; gap: 8px; }
.font-row { display: flex; align-items: center; }
.combo { height: 21px; border: 1px solid #c8ccd2; background: #fff; justify-content: space-between; padding: 0 4px 0 3px; color: #111; }
.family { width: 95px; }
.size { width: 50px; border-left: 0; }
.marks { gap: 1px; }
.marks .vline { margin: 0 4px; background: #ddd; }
.mark { width: 22px; height: 22px; font: 13px/20px "Liberation Serif", serif; color: #111; }
.mark b, .mark u, .mark em { font-weight: 700; }
.mark.on { border: 1px solid #c29a3a; border-radius: 2px; background: linear-gradient(#fdd275, #ffe88a); }
.mark.wide { width: 32px; gap: 5px; }
.letter { width: 16px; border-bottom: 4px solid #d9232e; color: #33508c; font: bold 14px/12px "Liberation Serif", serif; }
.peek { padding: 3px 8px 0; gap: 8px; }
.pill { display: block; width: 16px; height: 8px; border-radius: 4px; background: #b3b3b3; }
.pct { width: 18px; font-size: 8px; line-height: 13px; padding-top: 10px; text-align: center; }
.pct svg { margin-top: 6px; }
.pct .pill { margin-left: 1px; }
.pills { display: flex; gap: 8px; width: 92px; padding-top: 10px; margin-right: 8px; }
.peek .small { align-self: flex-start; margin-top: -2px; }
.spread { justify-content: space-between; padding: 3px 10px 0 24px; }
.pale-caret { margin: 50px 0 0 auto; border-top-color: #bbb; flex: none; align-self: flex-start; }

/* document window */
.workspace { flex: 1; min-height: 0; padding: 3px 1px 0 2px; background: #d9dce1; border-bottom: 1px solid #888e96; display: flex; }
.doc { flex: 1; min-width: 0; display: flex; flex-direction: column; border: 1px solid #868c94; border-bottom: 0; border-radius: 4px 4px 0 0; background: linear-gradient(#e6e8eb, #eef0f2 30px); padding: 0 6px 6px 5px; }
.doc-title { height: 29px; flex: none; display: flex; align-items: center; gap: 5px; padding: 5px 14px 0 3px; font-size: 12px; color: #333; }
.doc-controls { margin-left: auto; display: flex; gap: 25px; }
.pane { display: flex; border: 1px solid #868c94; background: #fff; }
.timeline { height: 57px; flex: none; border-bottom-color: #a9aeb5; }
.sheet { flex: 1; min-height: 0; margin-top: 5px; }
.pane-label { width: 22px; flex: none; background: #6b7078; color: #fff; display: flex; align-items: center; justify-content: center; font-size: 12px; }
.pane-label.light { background: #adb1b8; color: #333; }
.pane-label span { writing-mode: vertical-rl; transform: rotate(180deg); white-space: nowrap; }
.tl-body { flex: 1; display: grid; grid-template-columns: 86px 1fr 85px; padding-top: 20px; }
.tl-end { display: flex; flex-direction: column; gap: 4px; padding: 0 4px; color: #0e2a4d; font-size: 12px; }
.tl-end small { font-size: 10px; color: #4a72a8; white-space: nowrap; line-height: 12px; }
.start { align-items: flex-end; }
.tl-track { position: relative; }
.tl-bar { height: 14px; background: #a8a8a8; border: 2px solid #828282; }
.month { position: absolute; top: -16px; height: 16px; padding-left: 2px; color: #8197b3; border: 0 solid; border-image: linear-gradient(transparent 65%, #8197b3 65%) 1; border-left-width: 1px; }

.sheet-area { flex: 1; min-width: 0; min-height: 0; display: grid; grid-template: 1fr 17px / 1fr 17px; }
.sheet-view { overflow: hidden; min-width: 0; min-height: 0; }
.res { width: 1281px; table-layout: fixed; border-collapse: separate; border-spacing: 0; font: 14px/18px Lato, "Open Sans", sans-serif; color: #000; }
.c-num { width: 42px; } .c-info { width: 45px; } .c-name { width: 143px; } .c-type { width: 80px; } .c-mat { width: 94px; }
.c-80 { width: 80px; } .c-73 { width: 73px; } .c-74 { width: 74px; } .c-79 { width: 79px; } .c-base { width: 101px; } .c-code { width: 94px; } .c-add { width: 143px; }
.res thead th { height: 19px; padding: 0 2px; text-align: left; font-weight: 400; font-size: 12px; line-height: 17px; color: #3b3420; background: linear-gradient(#ffcf56, #ffe873); border-right: 1px solid #c9962e; border-bottom: 1px solid #b58a2a; overflow: hidden; white-space: nowrap; }
.res thead th.num { background: #dfe3e8; border-bottom-color: #a9aeb5; }
.res thead th.info svg { display: block; margin: 0 auto; }
.res thead th.add { font-style: italic; padding-left: 17px; }
.drop { float: right; margin: 6px 4px 0 0; border: 4px solid transparent; border-top: 5px solid #3b3420; border-bottom: 0; }
.res tbody th { height: 21px; padding: 0; background: #dfe3e8; border-right: 1px solid #a9aeb5; border-bottom: 1px solid #a9aeb5; font: 12px/18px "Open Sans", sans-serif; color: #444; }
.res tbody th.it { font-style: italic; }
.res td { height: 21px; padding: 0 2px; border-right: 1px solid #d5d5d5; border-bottom: 1px solid #d5d5d5; white-space: nowrap; overflow: hidden; }
.res td:nth-child(3) { padding-left: 16px; }
.res td:nth-child(2) svg { display: block; margin-left: 1px; }
.res td:last-child { border-right-color: #888; }
.over td { color: #e00f14; font-weight: 700; }
.sel { outline: 1px solid #000; }
.sel td { background: #000; color: #1fe5dc; font-weight: 700; border-color: #555; }
.res .sel td:last-child { position: relative; overflow: visible; }
.sel td:last-child::after { content: ""; position: absolute; right: -3px; bottom: -3px; width: 5px; height: 5px; background: #000; }
.res .sel th { background: #ffe591; color: #776a3a; border-bottom-color: #c9a23c; }
.vscroll { background: #dde1e7; display: flex; flex-direction: column; align-items: center; padding: 6px 0 4px; }
.tri { border: 5px solid transparent; }
.tri.up { border-top: 0; border-bottom-color: #444; }
.tri.down { border-bottom: 0; border-top-color: #444; margin-top: auto; }
.tri.left { border-left: 0; border-right-color: #444; }
.tri.right { border-right: 0; border-left-color: #444; margin-left: auto; }
.vthumb { width: 16px; height: 17px; margin-top: 115px; border: 1px solid #8d939b; border-radius: 2px; background: #f4f5f7; display: flex; flex-direction: column; gap: 2px; align-items: center; justify-content: center; }
.vthumb i { width: 8px; height: 1px; background: #777; }
.hscroll { background: linear-gradient(#d3d7dd, #e0e4ea); display: flex; align-items: center; padding: 0 4px; }
.hthumb { width: 16px; height: 15px; margin-left: 8px; border: 1px solid #8d939b; border-radius: 2px; background: #f4f5f7; display: flex; gap: 2px; align-items: center; justify-content: center; }
.hthumb i { width: 1px; height: 7px; background: #777; }
.corner { background: #b4b8c2; }

/* status bar */
.status { height: 22px; flex: none; display: flex; align-items: center; background: linear-gradient(#e3e5e8, #b9bdc2); color: #444; }
.ready { width: 49px; padding-left: 8px; line-height: 20px; border-right: 1px solid #888; }
.newtasks { display: flex; align-items: center; gap: 4px; line-height: 20px; padding: 0 9px 0 21px; border-right: 1px solid #888; white-space: nowrap; }
.views { margin-left: auto; display: flex; align-items: center; gap: 5px; height: 20px; padding-left: 8px; border-left: 1px solid #999; }
.current { width: 19px; height: 18px; margin-left: -3px; border: 1px solid #c9962e; border-radius: 2px; background: #ffe27a; }
.zoom { width: 138px; display: flex; align-items: center; padding: 0 5px 0 2px; }
.rail { flex: 1; height: 8px; background: linear-gradient(#888, #888) center / 100% 1px no-repeat, linear-gradient(#888, #888) center / 1px 8px no-repeat; }

/* taskbar */
.taskbar { height: 40px; flex: none; display: flex; background: linear-gradient(90deg, #213740, #20323f 60%, #182746); color: #fff; font-size: 13px; }
.tb { position: relative; width: 49px; flex: none; height: 40px; }
.start-btn { width: 48px; }
.tb.open::after { content: ""; position: absolute; left: 4px; right: 4px; bottom: 0; height: 2px; background: #76b9ed; }
.tb.active { background: #4d5d69; }
.tb.active::after { left: 0; right: 0; }
.badge { position: absolute; right: 4px; bottom: 4px; width: 17px; height: 17px; border: 1px solid #999; border-radius: 50%; background: #222c33; font: bold 10px/15px "Open Sans", sans-serif; }
.search { width: 344px; flex: none; display: flex; align-items: center; gap: 11px; padding-left: 12px; background: #f2f2f2; border: 1px solid #ccc; border-width: 1px 1px 1px 0; }
.search input { flex: 1; min-width: 0; border: 0; background: none; outline: 0; font: 14px/20px "Open Sans", sans-serif; color: #333; padding: 0; }
.search input::placeholder { color: #444; opacity: 1; }
.tray { margin-left: auto; display: flex; align-items: center; gap: 10px; padding-right: 24px; white-space: nowrap; }
.weather { margin-left: -3px; }
.tray .chev { margin: 0 0 0 7px; }
.lang { font-size: 12px; margin-left: -1px; }
.clock { font-size: 11px; line-height: 18px; text-align: center; margin: 0 8px 2px 2px; }

/* dialog */
.dialog { position: absolute; left: 383px; top: 64px; width: 599px; background: #f0f0f0; border: 1px solid #666; box-shadow: 0 2px 14px rgba(0, 0, 0, .5); font: 11px/13px Roboto, "Open Sans", sans-serif; color: #000; }
.dlg-head { height: 25px; background: #fff; display: flex; align-items: center; justify-content: space-between; padding: 0 10px 0 3px; font-size: 12px; }
.dlg-body { padding: 11px 8px 5px; }
.base { display: flex; align-items: center; height: 24px; margin: 15px 0 6px; }
.base label { width: 83px; padding-bottom: 5px; }
.select-wrap { position: relative; width: 144px; height: 24px; display: flex; }
.select-wrap select { appearance: none; width: 100%; border: 1px solid #707070; border-radius: 0; background: #fff; font: inherit; color: #000; padding: 0 4px 3px; }
.select-wrap svg { position: absolute; right: 4px; top: 11px; }
.top { display: grid; grid-template-columns: 146px 200px 1fr; }
.cap { line-height: 13px; }
.cal-cap { padding-left: 8px; white-space: nowrap; }
.legend { width: 126px; margin: 3px 0 0 1px; border: 1px dotted #000; padding: 5px 6px 12px; display: flex; flex-direction: column; height: 192px; justify-content: space-between; }
.item { display: flex; gap: 5px; align-items: center; white-space: nowrap; min-height: 24px; }
.sw { width: 25px; height: 23px; flex: none; border: 1px dotted #000; background: #fff; text-align: center; text-decoration: underline; font: bold 11px/16px "DejaVu Sans", sans-serif; }
.sw.gray { background: #d0d0d0; } .sw.cyan { background: #dcffff; } .sw.cream { background: #ffffe0; }
.cal-row { display: flex; margin-top: 6px; height: 186px; overflow: hidden; }
.cal { width: 183px; height: 170px; table-layout: fixed; border-collapse: collapse; background: #fff; }
.cal caption { height: 14px; line-height: 14px; font-size: 11px; background: #f0f0f0; }
.cal th { height: 15px; padding: 0; font-weight: 400; border: 1px solid #000; background: #f0f0f0; line-height: 13px; }
.cal td { height: 26px; padding: 2px 2px 0 0; border: 1px solid #000; vertical-align: top; text-align: center; font: 11px/13px "DejaVu Sans", sans-serif; }
.cal tbody tr:last-child td { height: 25px; border-bottom: 0; }
.cal .off { background: #d0d0d0; color: #333; }
.cal .today { color: #fff; background: linear-gradient(90deg, #5a0f14 1px, transparent 1px) 0 0 / 2px 2px, linear-gradient(#5a0f14 1px, #ff9c9c 1px) 0 0 / 2px 2px; }
.wscroll { display: flex; flex-direction: column; align-items: center; }
.wscroll path { fill: none; stroke: #505050; stroke-width: 2; }
.wscroll i { background: #cdcdcd; }
.cal-scroll { width: 17px; padding: 6px 1px 5px 0; }
.cal-scroll i { width: 15px; height: 17px; margin: 83px 0 auto; }
.info-col { padding: 20px 20px 0 14px; }
.based { margin-top: 83px; }
.why { margin: 8px 0 0 14px; }
.bottom { display: flex; justify-content: space-between; margin: 11px 2px 0 1px; }
.tabbox { width: 492px; }
.dtabs { display: flex; align-items: flex-end; height: 20px; }
.dtab { height: 18px; padding: 0 4px; border: 1px solid #d9d9d9; border-bottom: 0; border-left: 0; }
.dtab.cur { height: 21px; padding: 0 6px 2px; border-left: 1px solid #d9d9d9; background: #fff; margin-bottom: -1px; z-index: 1; }
.dpanel { display: flex; height: 214px; padding: 13px 11px 9px 9px; background: #fff; border: 1px solid #d9d9d9; }
.exc-view { flex: 1; overflow: hidden; }
.exc { width: 100%; table-layout: fixed; border-collapse: collapse; }
.e-num { width: 30px; } .e-start, .e-fin { width: 93px; }
.exc th { height: 16px; padding: 0 2px 0 1px; border: 1px solid #a0a0a0; background: #f0f0f0; font-weight: 400; text-align: left; line-height: 14px; }
.exc thead th:last-child { border-right: 0; }
.exc thead th { height: 17px; }
.exc tbody th { text-align: center; }
.exc td { height: 16px; padding: 0 2px 0 1px; border: 1px dotted #000; border-right: 0; line-height: 14px; }
.exc td:nth-child(2) { border-left: 1px solid #a0a0a0; }
.exc .picked { background: #000; color: #fff; }
.exc-scroll { width: 17px; background: #f0f0f0; padding: 6px 0 5px; }
.exc-scroll i { width: 15px; height: 17px; margin: 6px 0 auto; }
.side { display: flex; flex-direction: column; gap: 8px; padding-top: 35px; }
.btn { width: 75px; height: 21px; border: 1px solid #adadad; background: #e1e1e1; }
.actions { display: flex; align-items: center; gap: 11px; margin-top: 12px; margin-left: -2px; padding-top: 10px; border-top: 1px solid #dcdcdc; }
.help { margin-right: auto; }
.ok { border: 2px solid #0f6fc4; outline: 1px dotted #000; outline-offset: -3px; }
```
